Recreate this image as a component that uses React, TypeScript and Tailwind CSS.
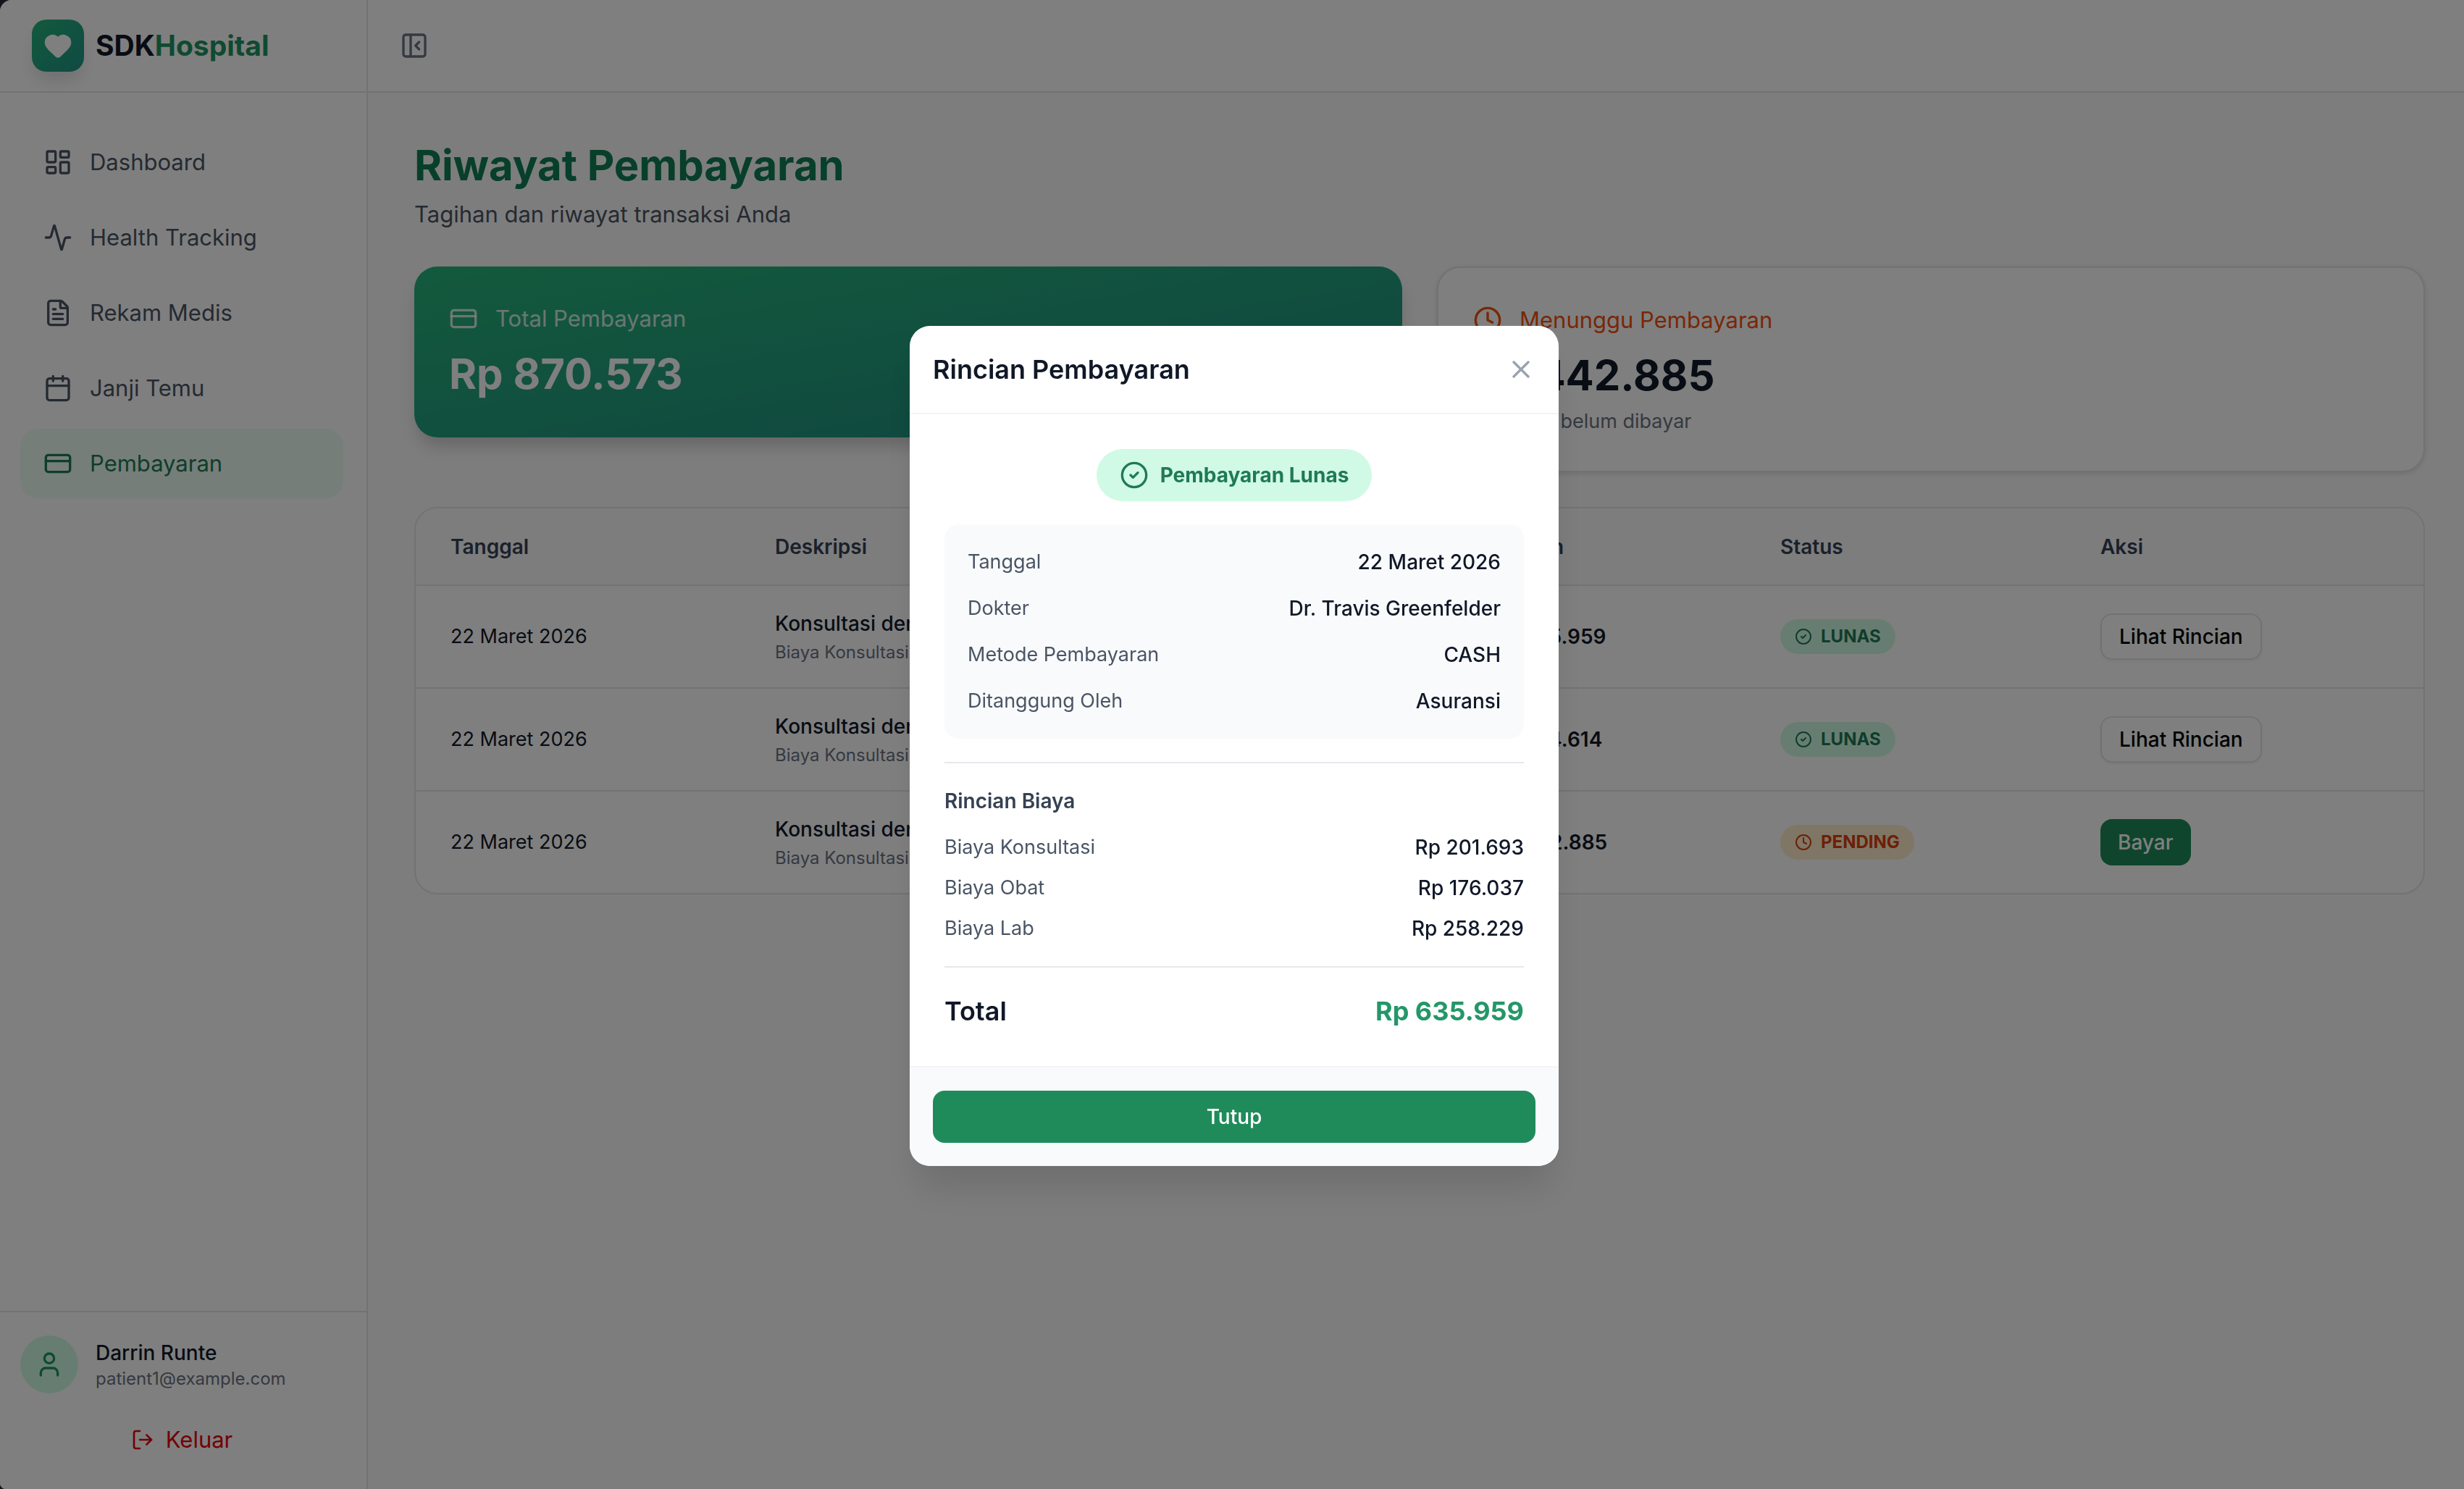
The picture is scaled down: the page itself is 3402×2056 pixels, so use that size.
import React from 'react';
import {
  Activity,
  Calendar,
  CircleCheck,
  Clock,
  CreditCard,
  FileText,
  Heart,
  LayoutDashboard,
  LogOut,
  PanelLeftClose,
  User,
  X,
} from 'lucide-react';

type PaymentStatus = 'LUNAS' | 'PENDING';

interface Payment {
  id: number;
  date: string;
  description: string;
  detail: string;
  amount: string;
  status: PaymentStatus;
}

const navItems = [
  { label: 'Dashboard', icon: LayoutDashboard },
  { label: 'Health Tracking', icon: Activity },
  { label: 'Rekam Medis', icon: FileText },
  { label: 'Janji Temu', icon: Calendar },
  { label: 'Pembayaran', icon: CreditCard, active: true },
];

const payments: Payment[] = [
  {
    id: 1,
    date: '22 Maret 2026',
    description: 'Konsultasi dengan Dr. Travis Greenfelder',
    detail: 'Biaya Konsultasi, Obat, Lab',
    amount: 'Rp 635.959',
    status: 'LUNAS',
  },
  {
    id: 2,
    date: '22 Maret 2026',
    description: 'Konsultasi dengan Dr. Travis Greenfelder',
    detail: 'Biaya Konsultasi, Obat',
    amount: 'Rp 234.614',
    status: 'LUNAS',
  },
  {
    id: 3,
    date: '22 Maret 2026',
    description: 'Konsultasi dengan Dr. Travis Greenfelder',
    detail: 'Biaya Konsultasi, Obat, Lab',
    amount: 'Rp 442.885',
    status: 'PENDING',
  },
];

const invoiceInfo = [
  { label: 'Tanggal', value: '22 Maret 2026' },
  { label: 'Dokter', value: 'Dr. Travis Greenfelder' },
  { label: 'Metode Pembayaran', value: 'CASH' },
  { label: 'Ditanggung Oleh', value: 'Asuransi' },
];

const costItems = [
  { label: 'Biaya Konsultasi', value: 'Rp 201.693' },
  { label: 'Biaya Obat', value: 'Rp 176.037' },
  { label: 'Biaya Lab', value: 'Rp 258.229' },
];

const Sidebar = () => (
  <aside className="flex w-[508px] shrink-0 flex-col border-r-2 border-[#e5e5e5] bg-white">
    <div className="flex h-32 items-center gap-4 border-b-2 border-[#e5e5e5] pl-11">
      <div className="flex size-18 items-center justify-center rounded-[20px] bg-linear-to-br from-[#27b47a] to-[#1f9488] shadow-[0_16px_24px_-4px_rgba(0,0,0,0.12)]">
        <Heart className="size-10 fill-white text-white" />
      </div>
      <span className="text-[39px] leading-14 font-bold text-[#101828]">
        SDK<span className="text-[#1f9563]">Hospital</span>
      </span>
    </div>

    <nav className="flex flex-1 flex-col gap-2 py-12 pr-8 pl-7">
      {navItems.map(({ label, icon: Icon, active }) => (
        <a
          key={label}
          href="#"
          className={`flex h-24 items-center gap-6 rounded-3xl px-8 text-[31px] ${
            active ? 'bg-[#ecfdf5] text-[#1f7a55]' : 'text-[#4a5565]'
          }`}
        >
          <Icon className="size-10" />
          {label}
        </a>
      ))}
    </nav>

    {/* user */}
    <div className="border-t-2 border-[#e5e5e5] pt-8 pr-8 pb-7 pl-7">
      <div className="flex items-center gap-6">
        <div className="flex size-20 items-center justify-center rounded-full bg-[#d0fae5]">
          <User className="size-10 text-[#1f9563]" />
        </div>
        <div>
          <p className="text-[28px] leading-10 font-medium text-[#101828]">Darrin Runte</p>
          <p className="text-2xl text-[#6a7282]">patient1@example.com</p>
        </div>
      </div>
      <button className="mt-6 flex h-20 w-full items-center justify-center gap-4 text-[31px] text-[#e7000b]">
        <LogOut className="size-8" />
        Keluar
      </button>
    </div>
  </aside>
);

const StatusBadge = ({ status }: { status: PaymentStatus }) => {
  const Icon = status === 'LUNAS' ? CircleCheck : Clock;
  return (
    <span
      className={`inline-flex h-12 items-center gap-3 rounded-full px-5 text-2xl font-bold ${
        status === 'LUNAS' ? 'bg-[#d0fae5] text-[#1f7a55]' : 'bg-[#ffeccc] text-[#d8400c]'
      }`}
    >
      <Icon className="size-6" />
      {status}
    </span>
  );
};

const SummaryCards = () => (
  <section className="mt-12 grid grid-cols-2 items-start gap-12">
    <div className="rounded-4xl bg-linear-to-br from-[#27b47a] to-[#1f8a80] p-12 pb-13 shadow-[0_16px_24px_-6px_rgba(0,0,0,0.2)]">
      <div className="flex items-center gap-6 text-[31px] leading-12 text-white/80">
        <CreditCard className="size-10" />
        <h2>Total Pembayaran</h2>
      </div>
      <p className="mt-4 text-[58px] leading-18 font-bold text-white">Rp 870.573</p>
    </div>
    <div className="rounded-4xl border-2 border-[#e5e5e5] bg-white p-12 shadow-[0_2px_6px_rgba(0,0,0,0.12)]">
      <div className="flex items-center gap-6 text-[31px] leading-12 text-[#f0500f]">
        <Clock className="size-10" />
        <h2>Menunggu Pembayaran</h2>
      </div>
      <p className="mt-4 text-[58px] leading-18 font-bold text-[#101828]">Rp 442.885</p>
      <p className="mt-2 text-[27px] leading-10 text-[#6a7282]">1 tagihan belum dibayar</p>
    </div>
  </section>
);

const PaymentTable = () => (
  <section className="mt-12 overflow-hidden rounded-4xl border-2 border-[#e5e5e5] bg-white">
    <table className="w-full table-fixed text-left text-[28px] leading-10 text-[#101828]">
      <thead className="bg-[#fafafa] text-[#364153]">
        <tr className="h-[106px] border-b-2 border-[#e5e5e5]">
          <th className="w-[448px] px-12 font-semibold">Tanggal</th>
          <th className="px-12 font-semibold">Deskripsi</th>
          <th className="w-[398px] px-12 font-semibold">Jumlah</th>
          <th className="w-[442px] px-12 font-semibold">Status</th>
          <th className="w-[494px] px-12 font-semibold">Aksi</th>
        </tr>
      </thead>
      <tbody>
        {payments.map((payment) => (
          <tr key={payment.id} className="border-b-2 border-[#e5e5e5] last:border-b-0">
            <td className="px-12 text-[27px]">{payment.date}</td>
            <td className="px-12 py-8">
              <p className="font-medium">{payment.description}</p>
              <p className="mt-1 text-2xl text-[#6a7282]">{payment.detail}</p>
            </td>
            <td className="px-12 font-semibold">{payment.amount}</td>
            <td className="px-12">
              <div className="flex">
                <StatusBadge status={payment.status} />
              </div>
            </td>
            <td className="px-12">
              {payment.status === 'LUNAS' ? (
                <button className="flex h-16 items-center rounded-2xl border-2 border-[#e5e5e5] bg-white px-6 font-medium text-black shadow-[0_2px_4px_rgba(0,0,0,0.06)]">
                  Lihat Rincian
                </button>
              ) : (
                <button className="flex h-16 items-center rounded-2xl bg-[#1f8b5b] px-6 font-medium text-white">
                  Bayar
                </button>
              )}
            </td>
          </tr>
        ))}
      </tbody>
    </table>
  </section>
);

const PaymentDetailModal = () => (
  <div className="fixed inset-0 flex items-center justify-center bg-black/50 pt-1 pl-1.5">
    <div
      role="dialog"
      aria-labelledby="rincian-title"
      className="w-full max-w-[896px] overflow-hidden rounded-[28px] bg-white text-[28px] leading-10 shadow-[0_40px_50px_-10px_rgba(0,0,0,0.12)]"
    >
      <div className="flex h-[122px] items-center justify-between border-b-2 border-[#f3f4f6] px-8">
        <h2 id="rincian-title" className="text-4xl font-semibold text-[#101828]">
          Rincian Pembayaran
        </h2>
        <button aria-label="Tutup rincian" className="text-[#99a1af]">
          <X className="size-10" />
        </button>
      </div>

      <div className="p-12">
        <div className="flex justify-center">
          <span className="flex items-center gap-4 rounded-full bg-[#d0fae5] px-8 py-4 font-bold text-[#1f7a55]">
            <CircleCheck className="size-10" />
            Pembayaran Lunas
          </span>
        </div>

        <dl className="mt-8 flex flex-col gap-6 rounded-[20px] bg-[#f9fafb] p-8">
          {invoiceInfo.map((item) => (
            <div key={item.label} className="flex justify-between">
              <dt className="text-[27px] text-[#4a5565]">{item.label}</dt>
              <dd className="font-medium text-[#101828]">{item.value}</dd>
            </div>
          ))}
        </dl>

        <div className="mt-8 border-t-2 border-[#e5e7eb] pt-8">
          <h3 className="font-semibold text-[#364153]">Rincian Biaya</h3>
          <dl className="mt-6 flex flex-col gap-4">
            {costItems.map((item) => (
              <div key={item.label} className="flex justify-between">
                <dt className="text-[27px] text-[#4a5565]">{item.label}</dt>
                <dd className="font-medium text-[#101828]">{item.value}</dd>
              </div>
            ))}
          </dl>
        </div>

        <div className="mt-8 flex justify-between border-t-2 border-[#e5e7eb] pt-8 text-4xl leading-14">
          <span className="font-semibold text-[#101828]">Total</span>
          <span className="font-bold text-[#249768]">Rp 635.959</span>
        </div>
      </div>

      <div className="border-t-2 border-[#f3f4f6] bg-[#f9fafb] p-8">
        <button className="h-18 w-full rounded-2xl bg-[#1f8b5b] font-medium text-white">Tutup</button>
      </div>
    </div>
  </div>
);

export default function App() {
  return (
    <div className="bg-[#262a35] font-['Inter',sans-serif]">
      <div className="flex min-h-screen overflow-hidden rounded-tl-2xl rounded-bl-lg bg-[#fafafa]">
        <Sidebar />
        <div className="flex flex-1 flex-col">
          <header className="flex h-32 items-center border-b-2 border-[#e5e5e5] bg-white pl-11">
            <button aria-label="Tutup sidebar" className="text-[#6a7282]">
              <PanelLeftClose className="size-10" />
            </button>
          </header>
          <main className="flex-1 pt-16 pr-[54px] pl-16">
            <h1 className="text-[58px] leading-18 font-bold text-[#0f7f56]">Riwayat Pembayaran</h1>
            <p className="mt-2 text-[31px] leading-12 text-[#4a5565]">
              Tagihan dan riwayat transaksi Anda
            </p>
            <SummaryCards />
            <PaymentTable />
          </main>
        </div>
      </div>
      <PaymentDetailModal />
    </div>
  );
}
